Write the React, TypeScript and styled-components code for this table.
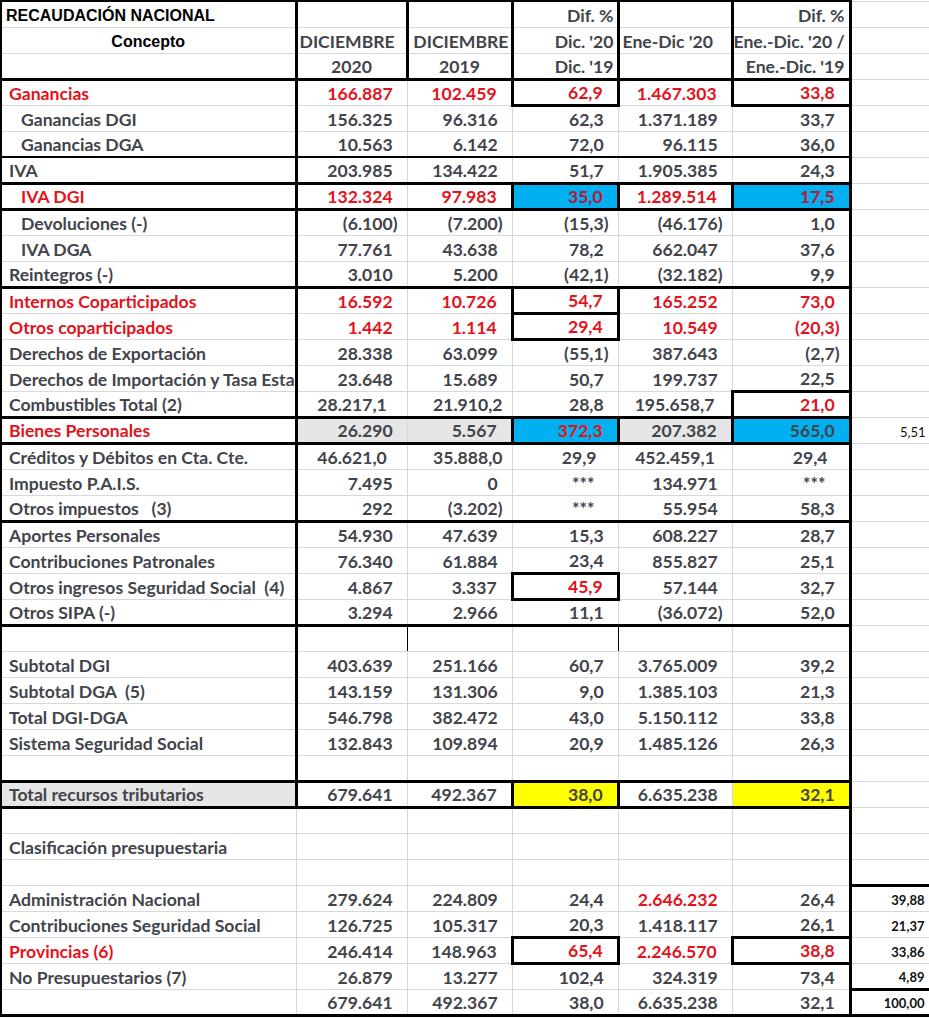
import React from 'react';
import styled, { createGlobalStyle, css } from 'styled-components';

const GlobalStyle = createGlobalStyle`
  html, body { margin: 0; padding: 0; background: #ffffff; overflow: hidden; }
  body { font-family: Lato, "Liberation Sans", sans-serif; }
`;

const GRID = '#d5d9df';
const INK = '#42444b';
const RED = '#e3121b';
const WINE = '#bf1630';
const BLUE = '#00b0f0';
const YELLOW = '#ffff00';
const SHADE = '#e7e6e6';

const EDGE = {
  thick: '3px solid #000',
  med: '2px solid #000',
  hair: '1px solid #000',
  outer: '2px solid #000',
  grid: `1px solid ${GRID}`,
};

const WIDTHS = [295, 111, 105, 106, 114, 118, 80];

type Kind = 'acct' | 'center' | 'right' | 'stars' | 'wide';

interface CellSpec {
  v: string;
  kind?: Kind;
  red?: boolean;
  wine?: boolean;
  bg?: string;
  box?: boolean;
}

interface RowSpec {
  label: string;
  indent?: boolean;
  red?: boolean;
  labelBg?: string;
  top?: 'thick' | 'med';
  cells?: CellSpec[];
  side?: string;
  sideBold?: boolean;
  sideBox?: 'first' | 'mid' | 'last' | 'single';
  split?: boolean;
}

interface HeadSpec {
  v: string;
  align: 'left' | 'right' | 'center';
  arial?: boolean;
  pad?: number;
}

const h = (v: string, align: HeadSpec['align'], pad = 3, arial = false): HeadSpec => ({ v, align, pad, arial });
const E: HeadSpec = { v: '', align: 'left' };

const HEAD: HeadSpec[][] = [
  [h('RECAUDACIÓN NACIONAL', 'left', 4, true), E, E, h('Dif. %', 'right', 3), E, h('Dif. %', 'right', 4)],
  [h('Concepto', 'center', 0, true), h('DICIEMBRE', 'left', 2), h('DICIEMBRE', 'right', 2), h("Dic. '20", 'right', 3), h("Ene-Dic '20", 'left', 3), h("Ene.-Dic. '20 /", 'right', 4)],
  [E, h('2020', 'center', 0), h('2019', 'center', 0), h("Dic. '19", 'right', 3), E, h("Ene.-Dic. '19", 'right', 4)],
];

const n = (v: string, o: Partial<CellSpec> = {}): CellSpec => ({ v, ...o });
const reds = (vals: string[], boxes: number[] = []): CellSpec[] =>
  vals.map((v, i) => n(v, { red: true, box: boxes.includes(i) }));
const plain = (vals: string[]): CellSpec[] => vals.map((v) => n(v));

const ROWS: RowSpec[] = [
  { label: 'Ganancias', red: true, top: 'thick', cells: reds(['166.887', '102.459', '62,9', '1.467.303', '33,8'], [2, 4]) },
  { label: 'Ganancias DGI', indent: true, cells: plain(['156.325', '96.316', '62,3', '1.371.189', '33,7']) },
  { label: 'Ganancias DGA', indent: true, cells: plain(['10.563', '6.142', '72,0', '96.115', '36,0']) },
  { label: 'IVA', top: 'med', cells: plain(['203.985', '134.422', '51,7', '1.905.385', '24,3']) },
  {
    label: 'IVA DGI', indent: true, red: true, top: 'thick',
    cells: [n('132.324', { red: true }), n('97.983', { red: true }), n('35,0', { wine: true, bg: BLUE, box: true }), n('1.289.514', { red: true }), n('17,5', { wine: true, bg: BLUE, box: true })],
  },
  { label: 'Devoluciones (-)', indent: true, top: 'thick', cells: plain(['(6.100)', '(7.200)', '(15,3)', '(46.176)', '1,0']) },
  { label: 'IVA DGA', indent: true, cells: plain(['77.761', '43.638', '78,2', '662.047', '37,6']) },
  { label: 'Reintegros (-)', cells: plain(['3.010', '5.200', '(42,1)', '(32.182)', '9,9']) },
  { label: 'Internos Coparticipados', red: true, top: 'thick', cells: reds(['16.592', '10.726', '54,7', '165.252', '73,0'], [2]) },
  { label: 'Otros coparticipados', red: true, cells: reds(['1.442', '1.114', '29,4', '10.549', '(20,3)'], [2]) },
  { label: 'Derechos de Exportación', cells: plain(['28.338', '63.099', '(55,1)', '387.643', '(2,7)']) },
  { label: 'Derechos de Importación y Tasa Esta', cells: plain(['23.648', '15.689', '50,7', '199.737', '22,5']) },
  {
    label: 'Combustibles Total (2)',
    cells: [n('28.217,1', { kind: 'center' }), n('21.910,2', { kind: 'right' }), n('28,8'), n('195.658,7', { kind: 'center' }), n('21,0', { red: true, box: true })],
  },
  {
    label: 'Bienes Personales', red: true, top: 'thick', side: '5,51',
    cells: [n('26.290', { bg: SHADE }), n('5.567', { bg: SHADE }), n('372,3', { red: true, bg: BLUE, box: true }), n('207.382', { bg: SHADE }), n('565,0', { bg: BLUE, box: true })],
  },
  {
    label: 'Créditos y Débitos en Cta. Cte.', top: 'thick',
    cells: [n('46.621,0', { kind: 'center' }), n('35.888,0', { kind: 'right' }), n('29,9', { kind: 'wide' }), n('452.459,1', { kind: 'center' }), n('29,4', { kind: 'wide' })],
  },
  { label: 'Impuesto P.A.I.S.', cells: [n('7.495'), n('0'), n('***', { kind: 'stars' }), n('134.971'), n('***', { kind: 'stars' })] },
  { label: 'Otros impuestos \u00a0 (3)', cells: [n('292'), n('(3.202)'), n('***', { kind: 'stars' }), n('55.954'), n('58,3')] },
  { label: 'Aportes Personales', top: 'thick', cells: plain(['54.930', '47.639', '15,3', '608.227', '28,7']) },
  { label: 'Contribuciones Patronales', cells: plain(['76.340', '61.884', '23,4', '855.827', '25,1']) },
  { label: 'Otros ingresos Seguridad Social \u00a0(4)', cells: [n('4.867'), n('3.337'), n('45,9', { red: true, box: true }), n('57.144'), n('32,7')] },
  { label: 'Otros SIPA (-)', cells: plain(['3.294', '2.966', '11,1', '(36.072)', '52,0']) },
  { label: '', top: 'thick', split: true },
  { label: 'Subtotal DGI', cells: plain(['403.639', '251.166', '60,7', '3.765.009', '39,2']) },
  { label: 'Subtotal DGA \u00a0(5)', cells: plain(['143.159', '131.306', '9,0', '1.385.103', '21,3']) },
  { label: 'Total DGI-DGA', cells: plain(['546.798', '382.472', '43,0', '5.150.112', '33,8']) },
  { label: 'Sistema Seguridad Social', cells: plain(['132.843', '109.894', '20,9', '1.485.126', '26,3']) },
  { label: '' },
  {
    label: 'Total recursos tributarios', top: 'thick', labelBg: SHADE,
    cells: [n('679.641'), n('492.367'), n('38,0', { bg: YELLOW, box: true }), n('6.635.238'), n('32,1', { bg: YELLOW })],
  },
  { label: '', top: 'thick' },
  { label: 'Clasificación presupuestaria' },
  { label: '' },
  {
    label: 'Administración Nacional', side: '39,88', sideBold: true, sideBox: 'first',
    cells: [n('279.624'), n('224.809'), n('24,4'), n('2.646.232', { red: true }), n('26,4')],
  },
  {
    label: 'Contribuciones Seguridad Social', side: '21,37', sideBold: true, sideBox: 'mid',
    cells: plain(['126.725', '105.317', '20,3', '1.418.117', '26,1']),
  },
  {
    label: 'Provincias (6)', red: true, side: '33,86', sideBold: true, sideBox: 'mid',
    cells: [n('246.414'), n('148.963'), n('65,4', { red: true, box: true }), n('2.246.570', { red: true }), n('38,8', { red: true, box: true })],
  },
  {
    label: 'No Presupuestarios (7)', side: '4,89', sideBold: true, sideBox: 'last',
    cells: plain(['26.879', '13.277', '102,4', '324.319', '73,4']),
  },
  {
    label: '', side: '100,00', sideBold: true, sideBox: 'single',
    cells: plain(['679.641', '492.367', '38,0', '6.635.238', '32,1']),
  },
];

const TOTAL_ROWS = HEAD.length + ROWS.length;
const A_THICK_UNTIL = 30; // 0-based row index of "Total recursos tributarios"

interface Edges { t: string; r: string; b: string; l: string }

function edgesFor(ri: number, ci: number, box: boolean, row?: RowSpec): Edges {
  const inTable = ci <= 5;
  let t = EDGE.grid;
  let r = EDGE.grid;
  let b = EDGE.grid;
  let l = EDGE.grid;

  if (ri === 0 && inTable) t = EDGE.outer;
  if (row?.top && inTable) t = row.top === 'thick' ? EDGE.thick : EDGE.med;
  if (box) { t = EDGE.thick; r = EDGE.thick; b = EDGE.thick; l = EDGE.thick; }

  if (ci === 0) l = EDGE.outer;
  if (ci === 0 && ri <= A_THICK_UNTIL) r = EDGE.thick;
  if (ri <= 2 && inTable) r = EDGE.thick;
  if (ci === 5) r = EDGE.thick;
  if (row?.split && (ci === 1 || ci === 3)) r = EDGE.hair;
  if (ri === TOTAL_ROWS - 1 && inTable) b = EDGE.thick;

  if (ci === 6 && row?.sideBox) {
    r = EDGE.thick;
    if (row.sideBox === 'first' || row.sideBox === 'single') t = EDGE.thick;
    if (row.sideBox === 'last' || row.sideBox === 'single') b = EDGE.thick;
  }
  return { t, r, b, l };
}

const bodyFont = css`
  font-family: Lato, "Liberation Sans", sans-serif;
  font-weight: 700;
  font-size: 17.6px;
`;

const Sheet = styled.table`
  border-collapse: collapse;
  table-layout: fixed;
  width: 929px;
`;

const Col = styled.col<{ $w: number }>`
  width: ${(p) => p.$w}px;
`;

const SheetRow = styled.tr`
  height: 26px;
`;

const BaseCell = styled.td<{ $e: Edges; $bg?: string }>`
  border-top: ${(p) => p.$e.t};
  border-right: ${(p) => p.$e.r};
  border-bottom: ${(p) => p.$e.b};
  border-left: ${(p) => p.$e.l};
  background: ${(p) => p.$bg ?? 'transparent'};
  padding: 0 0 1px 0;
  line-height: 20px;
  vertical-align: bottom;
  white-space: nowrap;
  overflow: hidden;
`;

const HeadCell = styled(BaseCell)<{ $align: string; $pad: number; $arial?: boolean }>`
  text-align: ${(p) => p.$align};
  padding-left: ${(p) => (p.$align === 'left' ? p.$pad : 0)}px;
  padding-right: ${(p) => (p.$align === 'right' ? p.$pad : 0)}px;
  ${(p) =>
    p.$arial
      ? css`
          font-family: "Liberation Sans", Arial, sans-serif;
          font-weight: 700;
          font-size: 16px;
          color: #000;
        `
      : css`
          ${bodyFont};
          color: ${INK};
        `}
`;

const LabelCell = styled(BaseCell)<{ $indent?: boolean; $red?: boolean }>`
  ${bodyFont};
  text-align: left;
  padding-left: ${(p) => (p.$indent ? 19 : 7)}px;
  color: ${(p) => (p.$red ? RED : INK)};
`;

const PAD: Record<Kind, number> = { acct: 9, center: 0, right: 9, stars: 23, wide: 21 };

const NumCell = styled(BaseCell)<{ $kind: Kind; $tone: string }>`
  ${bodyFont};
  text-align: ${(p) => (p.$kind === 'center' ? 'center' : 'right')};
  padding-right: ${(p) => PAD[p.$kind]}px;
  color: ${(p) => p.$tone};
`;

const SideCell = styled(BaseCell)<{ $bold?: boolean }>`
  font-family: Lato, "Liberation Sans", sans-serif;
  font-weight: ${(p) => (p.$bold ? 700 : 400)};
  font-size: 13px;
  color: #111;
  text-align: right;
  padding-right: 4px;
`;

const Ghost = styled.span`
  visibility: hidden;
`;

function NumberText({ cell }: { cell: CellSpec }) {
  const kind = cell.kind ?? 'acct';
  if (kind === 'acct' && !cell.v.endsWith(')')) {
    return (
      <>
        {cell.v}
        <Ghost>)</Ghost>
      </>
    );
  }
  return <>{cell.v}</>;
}

export default function App() {
  return (
    <>
      <GlobalStyle />
      <Sheet>
        <colgroup>
          {WIDTHS.map((w, i) => (
            <Col key={i} $w={w} />
          ))}
        </colgroup>
        <tbody>
          {HEAD.map((cols, ri) => (
            <SheetRow key={`h${ri}`}>
              {cols.map((c, ci) => (
                <HeadCell key={ci} $e={edgesFor(ri, ci, false)} $align={c.align} $pad={c.pad ?? 0} $arial={c.arial}>
                  {c.v}
                </HeadCell>
              ))}
              <SideCell $e={edgesFor(ri, 6, false)} />
            </SheetRow>
          ))}
          {ROWS.map((row, i) => {
            const ri = i + HEAD.length;
            return (
              <SheetRow key={`r${i}`}>
                <LabelCell $e={edgesFor(ri, 0, false, row)} $bg={row.labelBg} $indent={row.indent} $red={row.red}>
                  {row.label}
                </LabelCell>
                {[0, 1, 2, 3, 4].map((k) => {
                  const cell = row.cells?.[k];
                  const ci = k + 1;
                  if (!cell) return <NumCell key={k} $e={edgesFor(ri, ci, false, row)} $kind="acct" $tone={INK} />;
                  const tone = cell.wine ? WINE : cell.red ? RED : INK;
                  return (
                    <NumCell key={k} $e={edgesFor(ri, ci, !!cell.box, row)} $bg={cell.bg} $kind={cell.kind ?? 'acct'} $tone={tone}>
                      <NumberText cell={cell} />
                    </NumCell>
                  );
                })}
                <SideCell $e={edgesFor(ri, 6, false, row)} $bold={row.sideBold}>
                  {row.side ?? ''}
                </SideCell>
              </SheetRow>
            );
          })}
        </tbody>
      </Sheet>
    </>
  );
}
